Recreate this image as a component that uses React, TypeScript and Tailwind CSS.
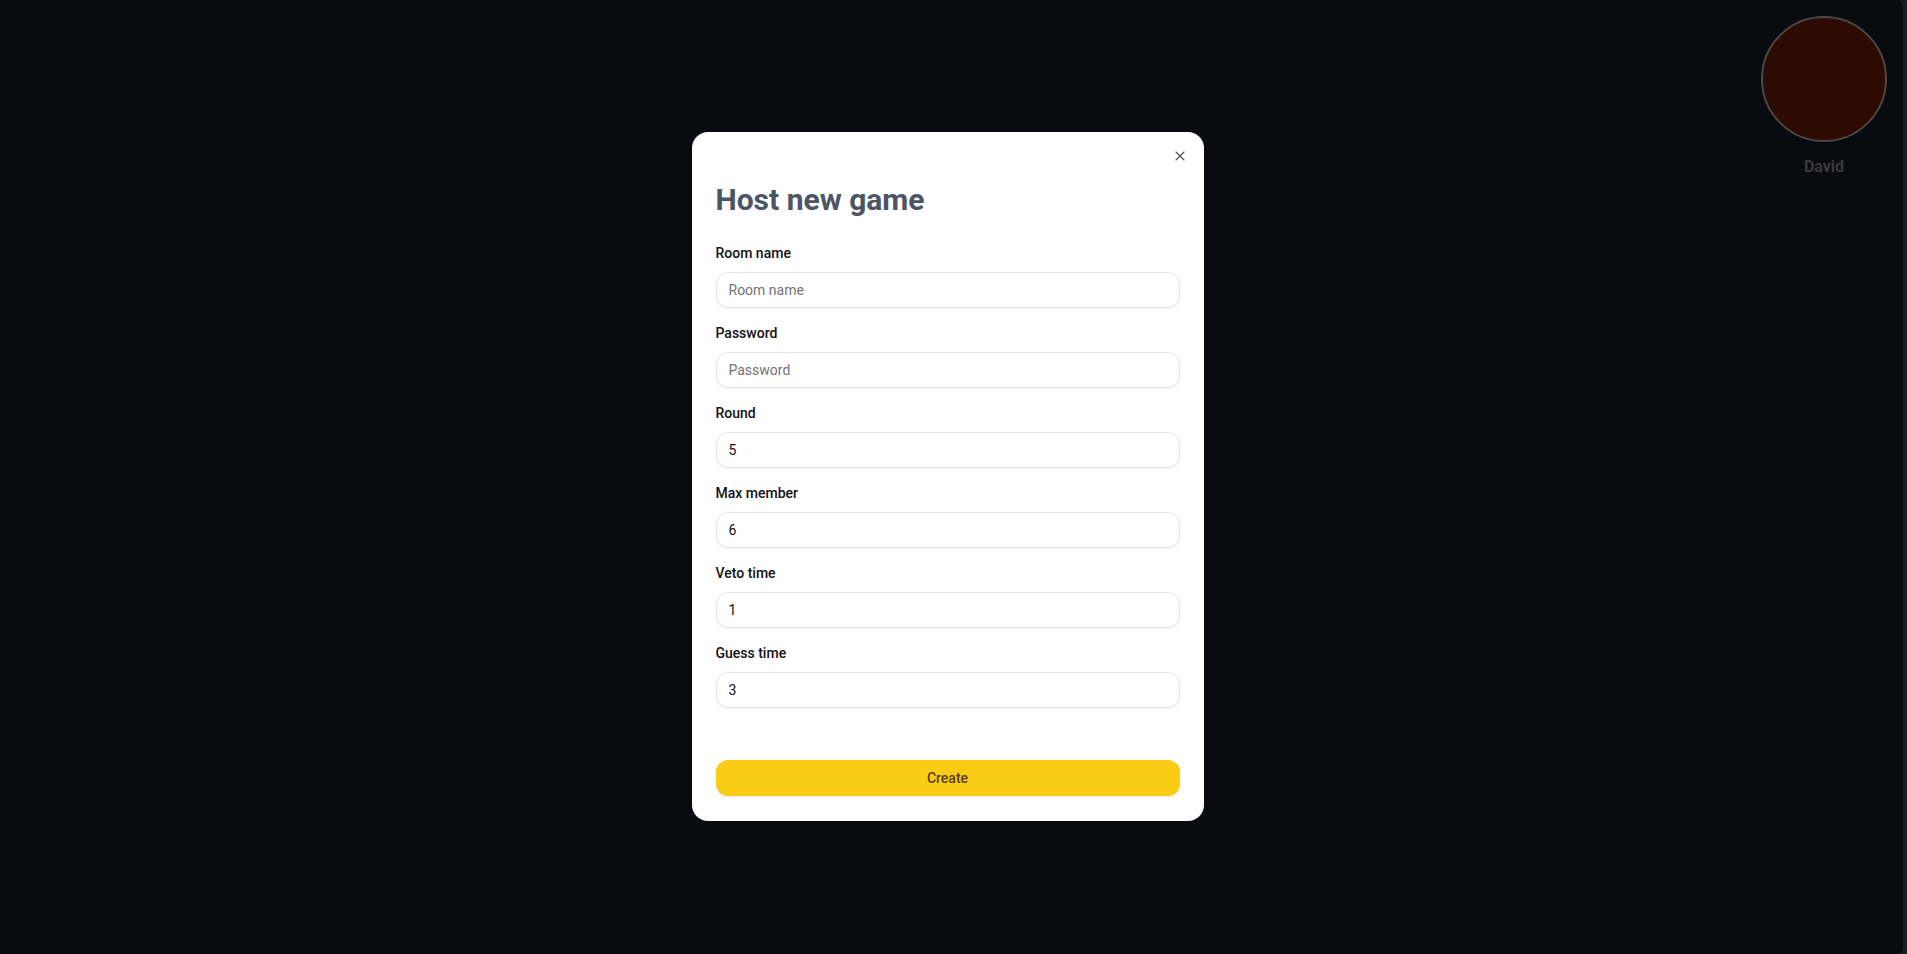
import React from "react";

const font = { fontFamily: 'Roboto, "Noto Sans", Arial, sans-serif' };

function Field({ label, placeholder, value }: { label: string; placeholder?: string; value?: string }) {
  return (
    <div className="flex flex-col">
      <label className="mt-px mb-[9px] h-5 text-sm leading-5 font-medium text-[#111111]">{label}</label>
      <input
        readOnly
        placeholder={placeholder}
        defaultValue={value}
        className="h-9 w-full rounded-xl border border-[#e4e4e7] bg-white px-3 text-sm text-[#111111] placeholder:text-[#737373] shadow-[0_1px_2px_rgba(0,0,0,0.05)] outline-none"
      />
    </div>
  );
}

export default function App() {
  return (
    <div className="flex h-[954px] w-full bg-[#1c1d21] pr-1" style={font}>
      <div className="relative flex flex-1 items-center justify-center rounded-r-[6px] bg-[#0a0b0f] pr-[8px] pb-[2px]">
        <div className="absolute right-4 top-4 flex w-[126px] flex-col items-center">
          <div className="h-[126px] w-[126px] rounded-full border-2 border-[#4a4847] bg-[#2e0b02]" />
          <div className="mt-[13px] text-base font-bold leading-6 text-[#3a3a3c]">David</div>
        </div>

        <div className="relative w-[512px] rounded-2xl bg-white px-6 pt-6 pb-[25px]">
          <button className="absolute right-4 top-4 flex h-4 w-4 items-center justify-center text-[#4b4b4b]">
            <svg width="16" height="16" viewBox="0 0 24 24" fill="none" stroke="currentColor" strokeWidth="1.6" strokeLinecap="round">
              <path d="M18 6 6 18" />
              <path d="m6 6 12 12" />
            </svg>
          </button>
          <h2 className="mt-[26px] text-3xl leading-9 font-bold text-[#4b5563]">Host new game</h2>
          <div className="mt-6 flex flex-col gap-[14px]">
            <Field label="Room name" placeholder="Room name" />
            <Field label="Password" placeholder="Password" />
            <Field label="Round" value="5" />
            <Field label="Max member" value="6" />
            <Field label="Veto time" value="1" />
            <Field label="Guess time" value="3" />
          </div>
          <button className="mt-[52px] h-9 w-full rounded-xl bg-[#facc15] text-sm font-medium text-[#5c3b0b] shadow-[0_1px_2px_rgba(0,0,0,0.08)]">
            Create
          </button>
        </div>
      </div>
    </div>
  );
}
